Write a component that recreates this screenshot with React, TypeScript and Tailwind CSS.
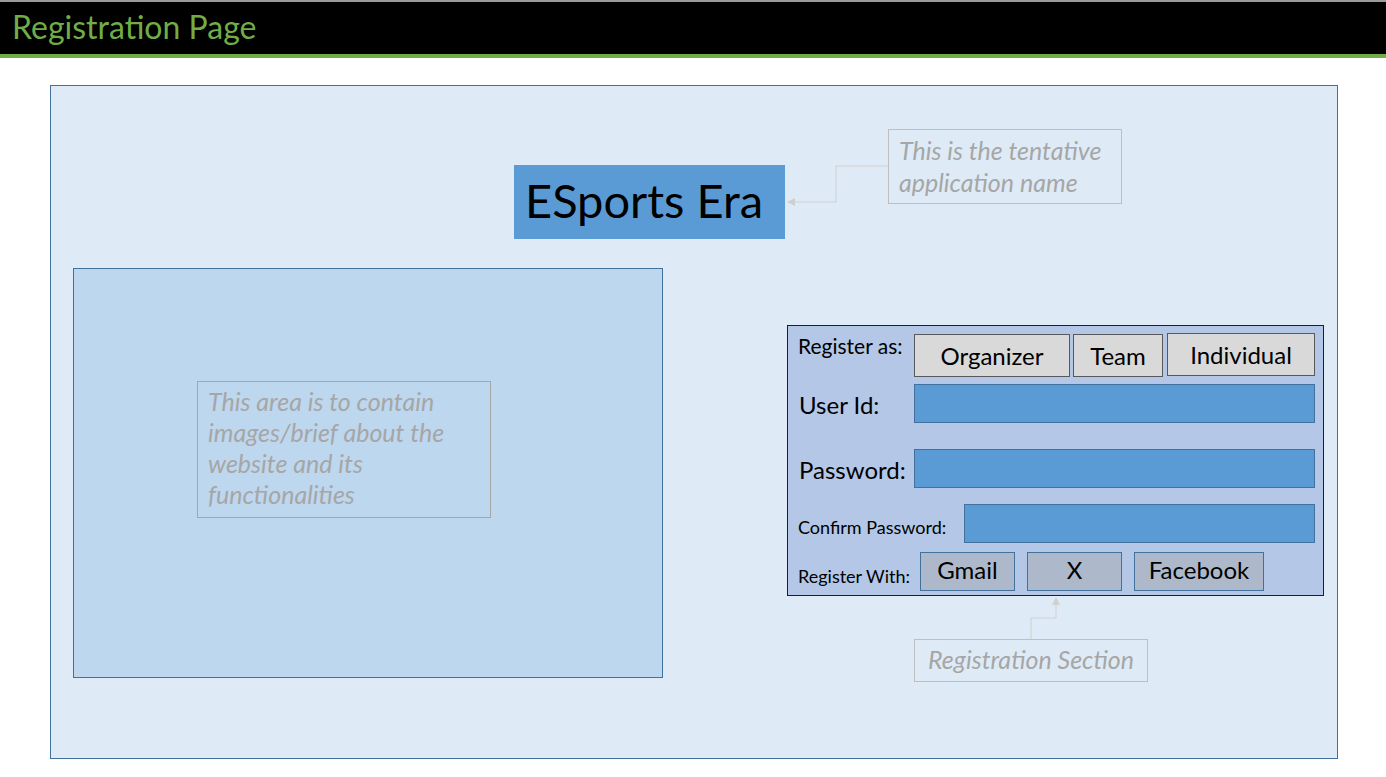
import type React from "react";

const font = { fontFamily: "Lato, 'Open Sans', sans-serif" };

function RoleButton({ label, w }: { label: string; w: string }): React.ReactElement {
  return (
    <div className={`${w} h-[43px] bg-[#d9d9d9] border border-[#595959] flex items-center justify-center text-[24px] text-black leading-none pt-[1px]`}>
      {label}
    </div>
  );
}

function SocialButton({ label, w }: { label: string; w: string }): React.ReactElement {
  return (
    <div className={`${w} h-[39px] bg-[#adb9ca] border border-[#41719c] flex items-center justify-center text-[24px] text-black leading-none pb-[4px]`}>
      {label}
    </div>
  );
}

function Field({ w }: { w: string }): React.ReactElement {
  return <div className={`${w} h-[39px] bg-[#5b9bd5] border border-[#41719c]`} />;
}

export default function App(): React.ReactElement {
  return (
    <div className="w-[1386px] h-[777px] bg-white overflow-hidden" style={font}>
      {/* header */}
      <div className="h-[54px] bg-black border-t-2 border-[#9a9a9a] flex items-center pl-[12px]">
        <h1 className="text-[32px] text-[#70ad47] leading-none pb-[2px]">Registration Page</h1>
      </div>
      <div className="h-[4px] bg-[#70ad47]" />

      {/* slide body */}
      <div className="relative mt-[27px] ml-[50px] w-[1288px] h-[674px] bg-[#deebf7] border border-[#41719c]">
        <div className="pl-[463px] pt-[79px]">
          <div className="w-[271px] h-[74px] bg-[#5b9bd5] flex items-center pl-[11px] text-[47px] text-black leading-none pb-[4px]">
            ESports Era
          </div>
        </div>

        <div className="flex items-start pt-[29px]">
          {/* left info area */}
          <div className="relative ml-[22px] w-[590px] h-[410px] bg-[#bdd7ee] border border-[#41719c]">
            <div className="absolute left-[123px] top-[112px] w-[294px] h-[137px] border border-[#a6a6a6] pl-[10px] pt-[4px] text-[25px] italic text-[#a6a6a6] leading-[31px] whitespace-nowrap">
              This area is to contain
              <br />
              images/brief about the
              <br />
              website and its
              <br />
              functionalities
            </div>
          </div>

          {/* registration panel */}
          <div className="ml-[124px] mt-[57px] w-[537px] h-[271px] bg-[#b4c7e7] border border-[#1f1f1f] pt-[8px] pl-[10px] pr-[8px] text-black">
            <div className="flex items-start">
              <div className="w-[116px] text-[21px] leading-none pt-[1px] whitespace-nowrap">Register as:</div>
              <div className="flex items-start">
                <RoleButton label="Organizer" w="w-[156px]" />
                <div className="ml-[3px]">
                  <RoleButton label="Team" w="w-[90px]" />
                </div>
                <div className="ml-[4px] -mt-[1px]">
                  <RoleButton label="Individual" w="w-[148px]" />
                </div>
              </div>
            </div>

            <div className="flex items-center mt-[7px]">
              <div className="w-[116px] text-[24px] pl-[1px] pt-[2px]">User Id:</div>
              <Field w="w-[401px]" />
            </div>

            <div className="flex items-center mt-[26px]">
              <div className="w-[116px] text-[24px] pl-[1px] pt-[2px]">Password:</div>
              <Field w="w-[401px]" />
            </div>

            <div className="flex items-center mt-[16px]">
              <div className="w-[166px] text-[18px] pt-[8px] whitespace-nowrap">Confirm Password:</div>
              <Field w="w-[351px]" />
            </div>

            <div className="flex items-center mt-[9px]">
              <div className="w-[122px] text-[18px] pt-[10px] whitespace-nowrap">Register With:</div>
              <SocialButton label="Gmail" w="w-[95px]" />
              <div className="ml-[12px]">
                <SocialButton label="X" w="w-[95px]" />
              </div>
              <div className="ml-[12px]">
                <SocialButton label="Facebook" w="w-[130px]" />
              </div>
            </div>
          </div>
        </div>

        {/* callouts */}
        <div className="absolute left-[837px] top-[43px] w-[234px] h-[75px] border border-[#bfbfbf] pl-[10px] pt-[4px] text-[25px] italic text-[#a6a6a6] leading-[32px] whitespace-nowrap">
          This is the tentative
          <br />
          application name
        </div>

        <div className="absolute left-[863px] top-[553px] w-[234px] h-[43px] border border-[#bfbfbf] flex items-center justify-center text-[25px] italic text-[#a6a6a6] pb-[1px] whitespace-nowrap">
          Registration Section
        </div>

        <svg className="absolute inset-0 pointer-events-none" width="1288" height="674">
          <path d="M837 80 H785 V116 H742" fill="none" stroke="#cfcfcf" strokeWidth="1" />
          <polygon points="736,116 744,112 744,120" fill="#cfcfcf" />
          <path d="M980 553 V532 H1005 V517" fill="none" stroke="#cfcfcf" strokeWidth="1" />
          <polygon points="1005,511 1001,519 1009,519" fill="#cfcfcf" />
        </svg>
      </div>
    </div>
  );
}
